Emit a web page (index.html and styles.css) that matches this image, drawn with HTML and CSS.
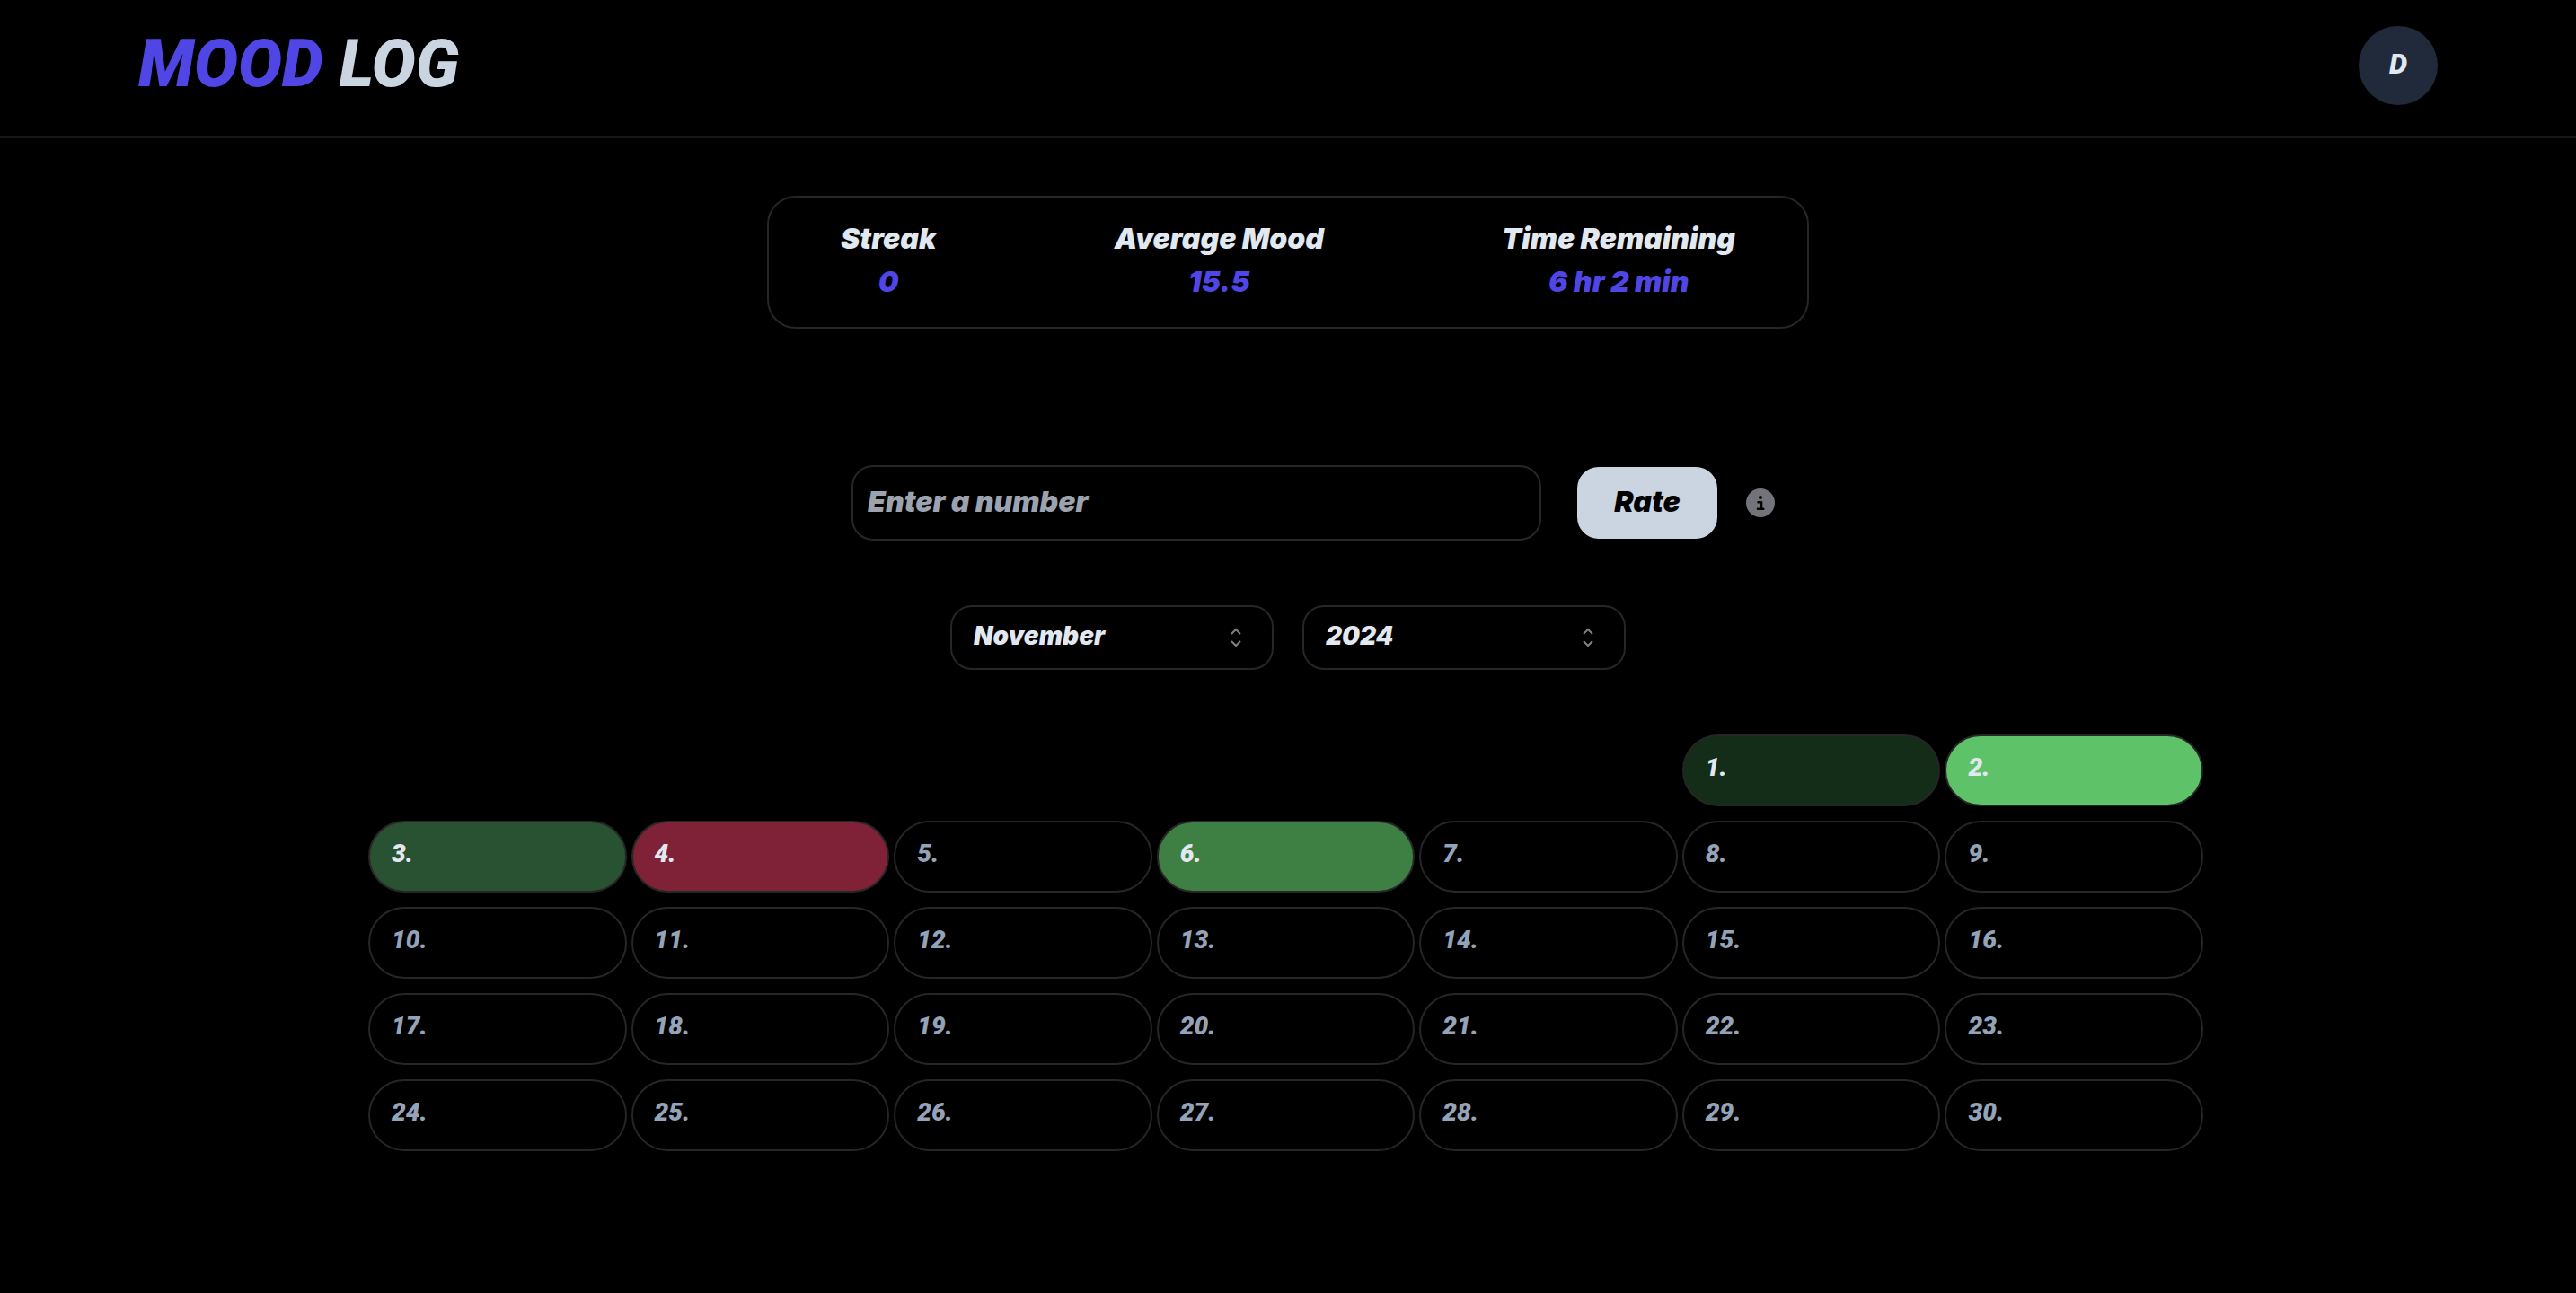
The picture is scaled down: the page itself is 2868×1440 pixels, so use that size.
FILE: index.html
```html
<!DOCTYPE html>
<html lang="en">
<head>
<meta charset="utf-8">
<meta name="viewport" content="width=device-width, initial-scale=1">
<title>Mood Log</title>
<link rel="stylesheet" href="styles.css">
</head>
<body>
<header class="site-header">
  <h1 class="logo"><span class="logo-accent">MOOD</span> LOG</h1>
  <button class="avatar" type="button">D</button>
</header>
<main class="content">
  <dl class="stats">
    <div class="stat"><dt>Streak</dt><dd>0</dd></div>
    <div class="stat"><dt>Average Mood</dt><dd>15.5</dd></div>
    <div class="stat"><dt>Time Remaining</dt><dd>6 hr 2 min</dd></div>
  </dl>

  <form class="rate-form">
    <input class="rate-input" type="text" inputmode="numeric" aria-label="Enter a number" placeholder="Enter a number">
    <button class="rate-button" type="button">Rate</button>
    <button class="info-button" type="button" aria-label="Rating help">
      <svg viewBox="0 0 32 32" width="32" height="32" aria-hidden="true">
        <circle cx="16" cy="16" r="16" fill="#737479"/>
        <circle cx="16" cy="10" r="2" fill="#000"/>
        <path d="M13.5 15.2H17V22.8M13 22.8h6.200" fill="none" stroke="#000" stroke-width="2.600" stroke-linecap="round" stroke-linejoin="round"/>
      </svg>
    </button>
  </form>

  <div class="filters">
    <div class="picker">
      <select aria-label="Month"><option>November</option></select>
      <svg class="chevrons" viewBox="0 0 16 24" width="16" height="24" aria-hidden="true"><path d="M3 8l5-5 5 5M3 16l5 5 5-5"/></svg>
    </div>
    <div class="picker">
      <select aria-label="Year"><option>2024</option></select>
      <svg class="chevrons" viewBox="0 0 16 24" width="16" height="24" aria-hidden="true"><path d="M3 8l5-5 5 5M3 16l5 5 5-5"/></svg>
    </div>
  </div>

  <div class="calendar">
    <button type="button" class="day first-day rated mood-deep">1.</button>
    <button type="button" class="day rated mood-bright">2.</button>
    <button type="button" class="day rated mood-forest">3.</button>
    <button type="button" class="day rated mood-red">4.</button>
    <button type="button" class="day">5.</button>
    <button type="button" class="day rated mood-green">6.</button>
    <button type="button" class="day">7.</button>
    <button type="button" class="day">8.</button>
    <button type="button" class="day">9.</button>
    <button type="button" class="day">10.</button>
    <button type="button" class="day">11.</button>
    <button type="button" class="day">12.</button>
    <button type="button" class="day">13.</button>
    <button type="button" class="day">14.</button>
    <button type="button" class="day">15.</button>
    <button type="button" class="day">16.</button>
    <button type="button" class="day">17.</button>
    <button type="button" class="day">18.</button>
    <button type="button" class="day">19.</button>
    <button type="button" class="day">20.</button>
    <button type="button" class="day">21.</button>
    <button type="button" class="day">22.</button>
    <button type="button" class="day">23.</button>
    <button type="button" class="day">24.</button>
    <button type="button" class="day">25.</button>
    <button type="button" class="day">26.</button>
    <button type="button" class="day">27.</button>
    <button type="button" class="day">28.</button>
    <button type="button" class="day">29.</button>
    <button type="button" class="day">30.</button>
  </div>
</main>
</body>
</html>
```
FILE: styles.css
```css
* { box-sizing: border-box; }

body {
  margin: 0;
  background: #000;
  color: #e2e8f0;
  font-family: Inter, "Liberation Sans", sans-serif;
  font-style: italic;
  font-weight: 900;
}

button, input, select {
  font: inherit;
  color: inherit;
}

button { cursor: pointer; }

/* Header */
.site-header {
  display: flex;
  align-items: center;
  justify-content: space-between;
  padding: 29px 154px 35px;
  border-bottom: 2px solid #171717;
  font-family: Roboto, "Liberation Sans", sans-serif;
}

.logo {
  margin: 0;
  padding-bottom: 4px;
  color: #cbd5e1;
  font-size: 73px;
  font-weight: 900;
  line-height: 80px;
}

.logo-accent { color: #4f46e5; }

.avatar {
  width: 88px;
  height: 88px;
  padding: 0 0 4px;
  border: 0;
  border-radius: 50%;
  background: #202a3a;
  font-size: 32px;
}

/* Main column */
.content {
  display: flex;
  flex-direction: column;
  align-items: center;
  padding: 64px 32px;
}

.stats {
  display: flex;
  justify-content: space-between;
  width: 100%;
  max-width: 1160px;
  margin: 0 0 152px;
  padding: 22px 80px 26px;
  border: 2px solid #262626;
  border-radius: 32px;
  font-size: 32px;
  line-height: 48px;
  text-align: center;
}

.stats dd {
  margin: 0;
  color: #4f46e5;
}

/* Rating form */
.rate-form {
  display: flex;
  align-items: center;
  justify-content: center;
  width: 100%;
  margin-bottom: 72px;
  padding-left: 56px;
  font-size: 32px;
}

.rate-input {
  flex: 0 1 768px;
  min-width: 0;
  height: 84px;
  margin-right: 40px;
  padding: 0 16px 4px;
  border: 2px solid #262626;
  border-radius: 24px;
  background: transparent;
}

.rate-input::placeholder {
  color: #9ca3af;
  opacity: 1;
}

.rate-button {
  height: 80px;
  width: 156px;
  margin-right: 32px;
  padding: 0 0 4px;
  border: 0;
  border-radius: 24px;
  background: #cbd5e1;
  color: #000;
}

.info-button {
  display: flex;
  padding: 0;
  border: 0;
  background: none;
}

/* Month and year */
.filters {
  display: flex;
  gap: 32px;
  margin-bottom: 72px;
}

.picker {
  display: grid;
  align-items: center;
  width: 360px;
}

.picker > * { grid-area: 1 / 1; }

.picker select {
  height: 72px;
  padding: 0 64px 4px 24px;
  border: 2px solid #262626;
  border-radius: 24px;
  background: transparent;
  font-size: 28px;
  appearance: none;
}

.chevrons {
  justify-self: end;
  margin-right: 34px;
  fill: none;
  stroke: #808085;
  stroke-width: 2;
  pointer-events: none;
}

/* Calendar */
.calendar {
  display: grid;
  grid-template-columns: repeat(7, 1fr);
  gap: 16px 5px;
  width: 100%;
  max-width: 2048px;
  padding-right: 5px;
  font-family: Roboto, "Liberation Sans", sans-serif;
}

.day {
  height: 80px;
  padding: 0 24px 8px;
  border: 2px solid #262626;
  border-radius: 40px;
  background: transparent;
  color: #94a3b8;
  font-size: 28px;
  text-align: left;
}

.first-day { grid-column: 6; }
.rated { color: #e2e8f0; }
.mood-deep { background: #132d19; }
.mood-bright { background: #5ec269; }
.mood-forest { background: #295232; }
.mood-red { background: #7f2137; }
.mood-green { background: #3e8044; }
```
